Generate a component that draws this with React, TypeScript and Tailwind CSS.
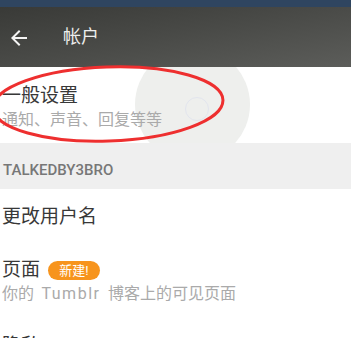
import React from 'react'

const font = { fontFamily: 'Roboto, "Noto Sans CJK SC", "Noto Sans", sans-serif' }

function BackArrow() {
  return (
    <svg width="24" height="24" viewBox="0 0 24 24" fill="#f4f4f4">
      <path d="M20 11H7.83l5.59-5.59L12 4l-8 8 8 8 1.41-1.41L7.83 13H20v-2z" />
    </svg>
  )
}

export default function App() {
  return (
    <div className="w-[351px] h-[338px] overflow-hidden bg-white relative" style={font}>
      <div className="h-[7px] bg-[#2f4560]" />
      <div className="h-[60px] flex items-center bg-gradient-to-br from-[#393a37] via-[#4a4b48] to-[#5c5d5a]">
        <div className="pl-[7px] pt-[1px] flex items-center">
          <BackArrow />
        </div>
        <div className="ml-[32px] text-[18px] text-[#eeeeee] leading-none">帐户</div>
      </div>

      <div className="relative h-[76px] overflow-hidden">
        <div className="absolute left-[135px] top-[-20px] w-[115px] h-[115px] rounded-full bg-[#eeefed]" />
        <div className="absolute left-[185px] top-[30px] w-[24px] h-[24px] rounded-full border border-[#e2e5ee]" />
        <div className="relative pl-[2px] pt-[17px]">
          <div className="text-[19px] leading-[24px] text-[#383838]">一般设置</div>
          <div className="text-[16px] leading-[20px] text-[#aaaaaa] mt-[2px]">通知、声音、回复等等</div>
        </div>
      </div>

      <div className="h-[46px] bg-[#efefef] flex items-center pl-[3px]">
        <span className="text-[15px] font-medium text-[#777777] pt-[9px]">TALKEDBY3BRO</span>
      </div>

      <div className="h-[53px] flex items-center pl-[2px]">
        <span className="text-[19px] text-[#383838] pt-[4px]">更改用户名</span>
      </div>

      <div className="pl-[2px] pt-[15px]">
        <div className="flex items-center gap-[8px] h-[26px]">
          <span className="text-[19px] leading-[26px] text-[#383838]">页面</span>
          <span className="h-[19px] w-[52px] rounded-full bg-[#f7941d] text-white text-[13px] leading-[19px] flex items-center justify-center">
            新建!
          </span>
        </div>
        <div className="text-[16px] leading-[20px] text-[#aaaaaa] mt-[1px]">
          你的<span className="mx-[2px] tracking-[1.5px]"> Tumblr </span>博客上的可见页面
        </div>
      </div>

      <div className="pl-[2px] pt-[30px] text-[19px] leading-[24px] text-[#383838]">隐私</div>

      <svg className="absolute left-0 top-0 pointer-events-none" width="351" height="338">
        <ellipse cx="108" cy="104" rx="115" ry="37" fill="none" stroke="#ee2f2f" strokeWidth="3" transform="rotate(-2 108 104)" />
      </svg>
    </div>
  )
}
